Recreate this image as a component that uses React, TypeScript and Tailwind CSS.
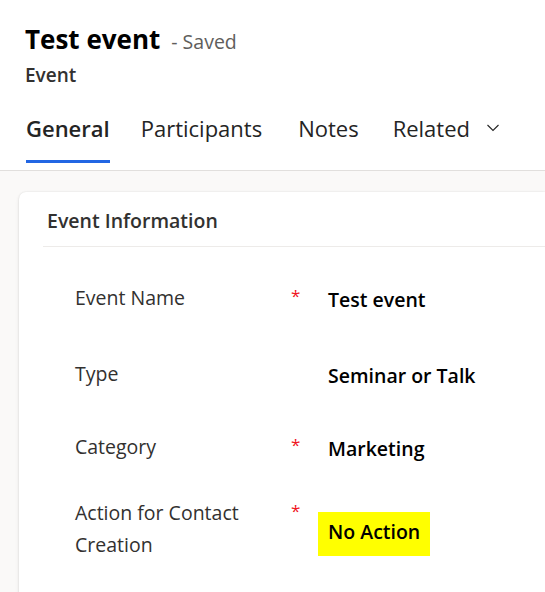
import React from "react";

const rows = [
  { label: ["Event Name"], req: true, value: "Test event", mt: "" },
  { label: ["Type"], req: false, value: "Seminar or Talk", mt: "mt-[32px]" },
  { label: ["Category"], req: true, value: "Marketing", mt: "mt-[29px]" },
  { label: ["Action for Contact", "Creation"], req: true, value: "No Action", hl: true, mt: "mt-[24px]" },
];

export default function App() {
  return (
    <div className="w-[545px] h-[592px] overflow-hidden bg-white font-['Segoe_UI','Open_Sans',sans-serif] text-[#242424]">
      <div className="pl-[25px] pt-[21px]">
        <div className="flex items-baseline">
          <span className="text-[26px] leading-[36px] font-bold text-black">Test event</span>
          <span className="ml-[11px] text-[19.5px] text-[#605e5c]">- Saved</span>
        </div>
        <div className="mt-[4px] text-[19px] leading-[28px] font-semibold text-[#323130]">Event</div>
      </div>
      <div className="mt-[23px] pl-[26px] flex border-b border-[#e1dfdd]">
        <div className="flex flex-col">
          <span className="text-[22px] leading-[32px] font-semibold text-[#242424]">General</span>
          <div className="mt-[16px] h-[3px] bg-[#2266e3]" />
          <div className="h-[7px]" />
        </div>
        <span className="ml-[31px] text-[22px] leading-[32px] text-[#242424]">Participants</span>
        <span className="ml-[36px] text-[22px] leading-[32px] text-[#242424]">Notes</span>
        <span className="ml-[34px] flex items-start gap-[17px] text-[22px] leading-[32px] text-[#242424]">
          Related
          <svg width="12" height="8" viewBox="0 0 12 8" className="mt-[12px]" fill="none">
            <path d="M0.5 1 L6 6.5 L11.5 1" stroke="#242424" strokeWidth="1.1" />
          </svg>
        </span>
      </div>
      <div className="bg-[#faf9f8] h-full pl-[19px] pt-[21px]">
        <div className="bg-white h-full rounded-tl-[7px] shadow-[0_0_2px_rgba(0,0,0,0.12),0_2px_4px_rgba(0,0,0,0.08)] pl-[24px]">
          <div className="pl-[4px] pt-[13px] pb-[9px] border-b border-[#edebe9] text-[19.5px] leading-[32px] font-semibold text-[#323130]">
            Event Information
          </div>
          <div className="pt-[33px] flex flex-col">
            {rows.map((r) => (
              <div key={r.value} className={`flex items-center ${r.mt}`}>
                <div className="flex items-start pb-[9px]">
                  <div className="w-[248px] pl-[32px] text-[19.5px] leading-[32px] text-[#323130]">
                    {r.label.map((l) => (
                      <div key={l}>{l}</div>
                    ))}
                  </div>
                  <div className="w-[27px] text-[17px] leading-[28px] text-[#f0141e]">
                    {r.req ? "*" : ""}
                  </div>
                </div>
                <div
                  className={`h-[44px] px-[10px] pt-[7px] text-[19.5px] leading-[26.5px] font-semibold text-black ${
                    r.hl ? "bg-[#ffff00]" : ""
                  }`}
                >
                  {r.value}
                </div>
              </div>
            ))}
          </div>
        </div>
      </div>
    </div>
  );
}
